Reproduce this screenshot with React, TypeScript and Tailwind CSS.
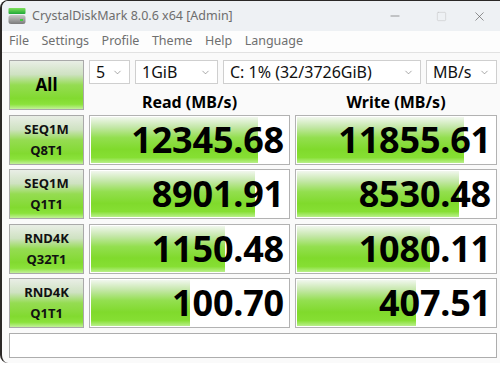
import { ChevronDown, Minus, Square, X } from "lucide-react";

const rows = [
  { a: "SEQ1M", b: "Q8T1", read: "12345.68", readPct: 85, write: "11855.61", writePct: 84.5 },
  { a: "SEQ1M", b: "Q1T1", read: "8901.91", readPct: 83, write: "8530.48", writePct: 82 },
  { a: "RND4K", b: "Q32T1", read: "1150.48", readPct: 68, write: "1080.11", writePct: 67 },
  { a: "RND4K", b: "Q1T1", read: "100.70", readPct: 50.5, write: "407.51", writePct: 60 },
];

const rowGap = ["mt-[5px]", "mt-[4px]", "mt-[5px]", "mt-[4px]"];

const greenBar =
  "bg-[linear-gradient(to_bottom,#f1f7ee_0%,#c4e7a8_22%,#93df4f_45%,#80da2c_70%,#86df33_88%,#b9f08a_100%)]";
const labelGreen =
  "bg-[linear-gradient(to_bottom,#e9eee6_0%,#cfe2c2_28%,#95dc52_50%,#82da30_78%,#8be23b_90%,#c2f19a_100%)]";

const AppIcon = () => (
  <svg width="18" height="17" viewBox="0 0 18 17">
    <defs>
      <linearGradient id="g1" x1="0" y1="0" x2="0" y2="1">
        <stop offset="0" stopColor="#7fe05a" />
        <stop offset="1" stopColor="#1fa83a" />
      </linearGradient>
      <linearGradient id="g2" x1="0" y1="0" x2="0" y2="1">
        <stop offset="0" stopColor="#c9c9c9" />
        <stop offset="1" stopColor="#7b7b7b" />
      </linearGradient>
    </defs>
    <rect x="0.5" y="0" width="17" height="6" rx="1" fill="url(#g1)" />
    <rect x="0.5" y="7" width="17" height="9" rx="2.5" fill="url(#g2)" />
    <rect x="12" y="11" width="3" height="2" fill="#3ccf3c" />
  </svg>
);

const Dropdown = ({ text, className }: { text: string; className: string }) => (
  <div
    className={`h-[24px] bg-white border border-[#cfcfcf] flex items-center justify-between pl-[6px] pr-[6px] text-[16px] text-[#111] ${className}`}
  >
    <span className="leading-none">{text}</span>
    <ChevronDown size={11} strokeWidth={1.4} className="text-[#777]" />
  </div>
);

const ValueBox = ({ value, pct, className }: { value: string; pct: number; className: string }) => (
  <div className={`relative h-[50px] bg-white border border-[#b2b2b2] p-[1px] ${className}`}>
    <div className={`h-full ${greenBar}`} style={{ width: `${pct}%` }} />
    <div className="absolute inset-0 flex items-center justify-end pr-[5px] text-[36px] font-bold text-black leading-none tracking-[-0.2px]">
      {value}
    </div>
  </div>
);

const App = () => {
  return (
    <div className="w-[500px] h-[366px] bg-white overflow-hidden" style={{ fontFamily: "'Noto Sans', 'Open Sans', sans-serif" }}>
      <div className="h-[363px] border-l-[2px] border-t-[1px] border-[#2b2826] rounded-tl-[8px] rounded-bl-[8px] bg-[#fafafa] flex flex-col overflow-hidden">
        {/* title bar */}
        <div className="h-[30px] bg-[#eef1f4] flex items-center shrink-0">
          <div className="pl-[6px] pr-[6px] pt-[1px]">
            <AppIcon />
          </div>
          <span className="text-[12.5px] text-[#6d6d6d]">CrystalDiskMark 8.0.6 x64 [Admin]</span>
          <div className="ml-auto flex items-center pr-[6px]">
            <div className="w-[46px] flex justify-center text-[#555]">
              <Minus size={14} strokeWidth={1} />
            </div>
            <div className="w-[46px] flex justify-center text-[#c4c4c4]">
              <Square size={11} strokeWidth={1.1} />
            </div>
            <div className="w-[30px] flex justify-center text-[#555]">
              <X size={15} strokeWidth={1} />
            </div>
          </div>
        </div>

        {/* menu */}
        <div className="h-[22px] bg-[#fdfdfd] border-b border-[#e2e2e2] flex items-center pl-[7px] gap-[12.5px] text-[12.5px] text-[#6f6f6f] shrink-0">
          <span>File</span>
          <span>Settings</span>
          <span>Profile</span>
          <span>Theme</span>
          <span>Help</span>
          <span>Language</span>
        </div>

        {/* content */}
        <div className="pl-[7px] pr-[1px] pt-[7px] flex flex-col">
          <div className="flex gap-[5px] h-[50px]">
            <div className={`w-[75px] h-[50px] border border-[#a9a9a9] flex items-center justify-center text-[17px] font-bold text-black ${labelGreen}`}>
              All
            </div>
            <div className="flex-1 flex flex-col">
              <div className="flex gap-[5px]">
                <Dropdown text="5" className="w-[41px]" />
                <Dropdown text="1GiB" className="w-[83px]" />
                <Dropdown text="C: 1% (32/3726GiB)" className="w-[198px]" />
                <Dropdown text="MB/s" className="w-[71px]" />
              </div>
              <div className="flex gap-[5px] h-[26px] items-center pt-[9px]">
                <div className="w-[201px] text-center text-[16px] font-bold text-black leading-[20px]">Read (MB/s)</div>
                <div className="w-[202px] text-center text-[16px] font-bold text-black leading-[20px]">Write (MB/s)</div>
              </div>
            </div>
          </div>

          {rows.map((r, i) => (
            <div key={i} className={`flex gap-[5px] ${rowGap[i]}`}>
              <div
                className={`w-[75px] h-[50px] border border-[#a9a9a9] flex flex-col items-center justify-center text-[13px] font-bold text-[#111] leading-[21px] ${labelGreen}`}
              >
                <span>{r.a}</span>
                <span>{r.b}</span>
              </div>
              <ValueBox value={r.read} pct={r.readPct} className="w-[201px]" />
              <ValueBox value={r.write} pct={r.writePct} className="w-[202px]" />
            </div>
          ))}

          <div className="mt-[5px] w-[488px] h-[25px] bg-white border border-[#adadad]" />
        </div>
      </div>
    </div>
  );
};

export default App;
